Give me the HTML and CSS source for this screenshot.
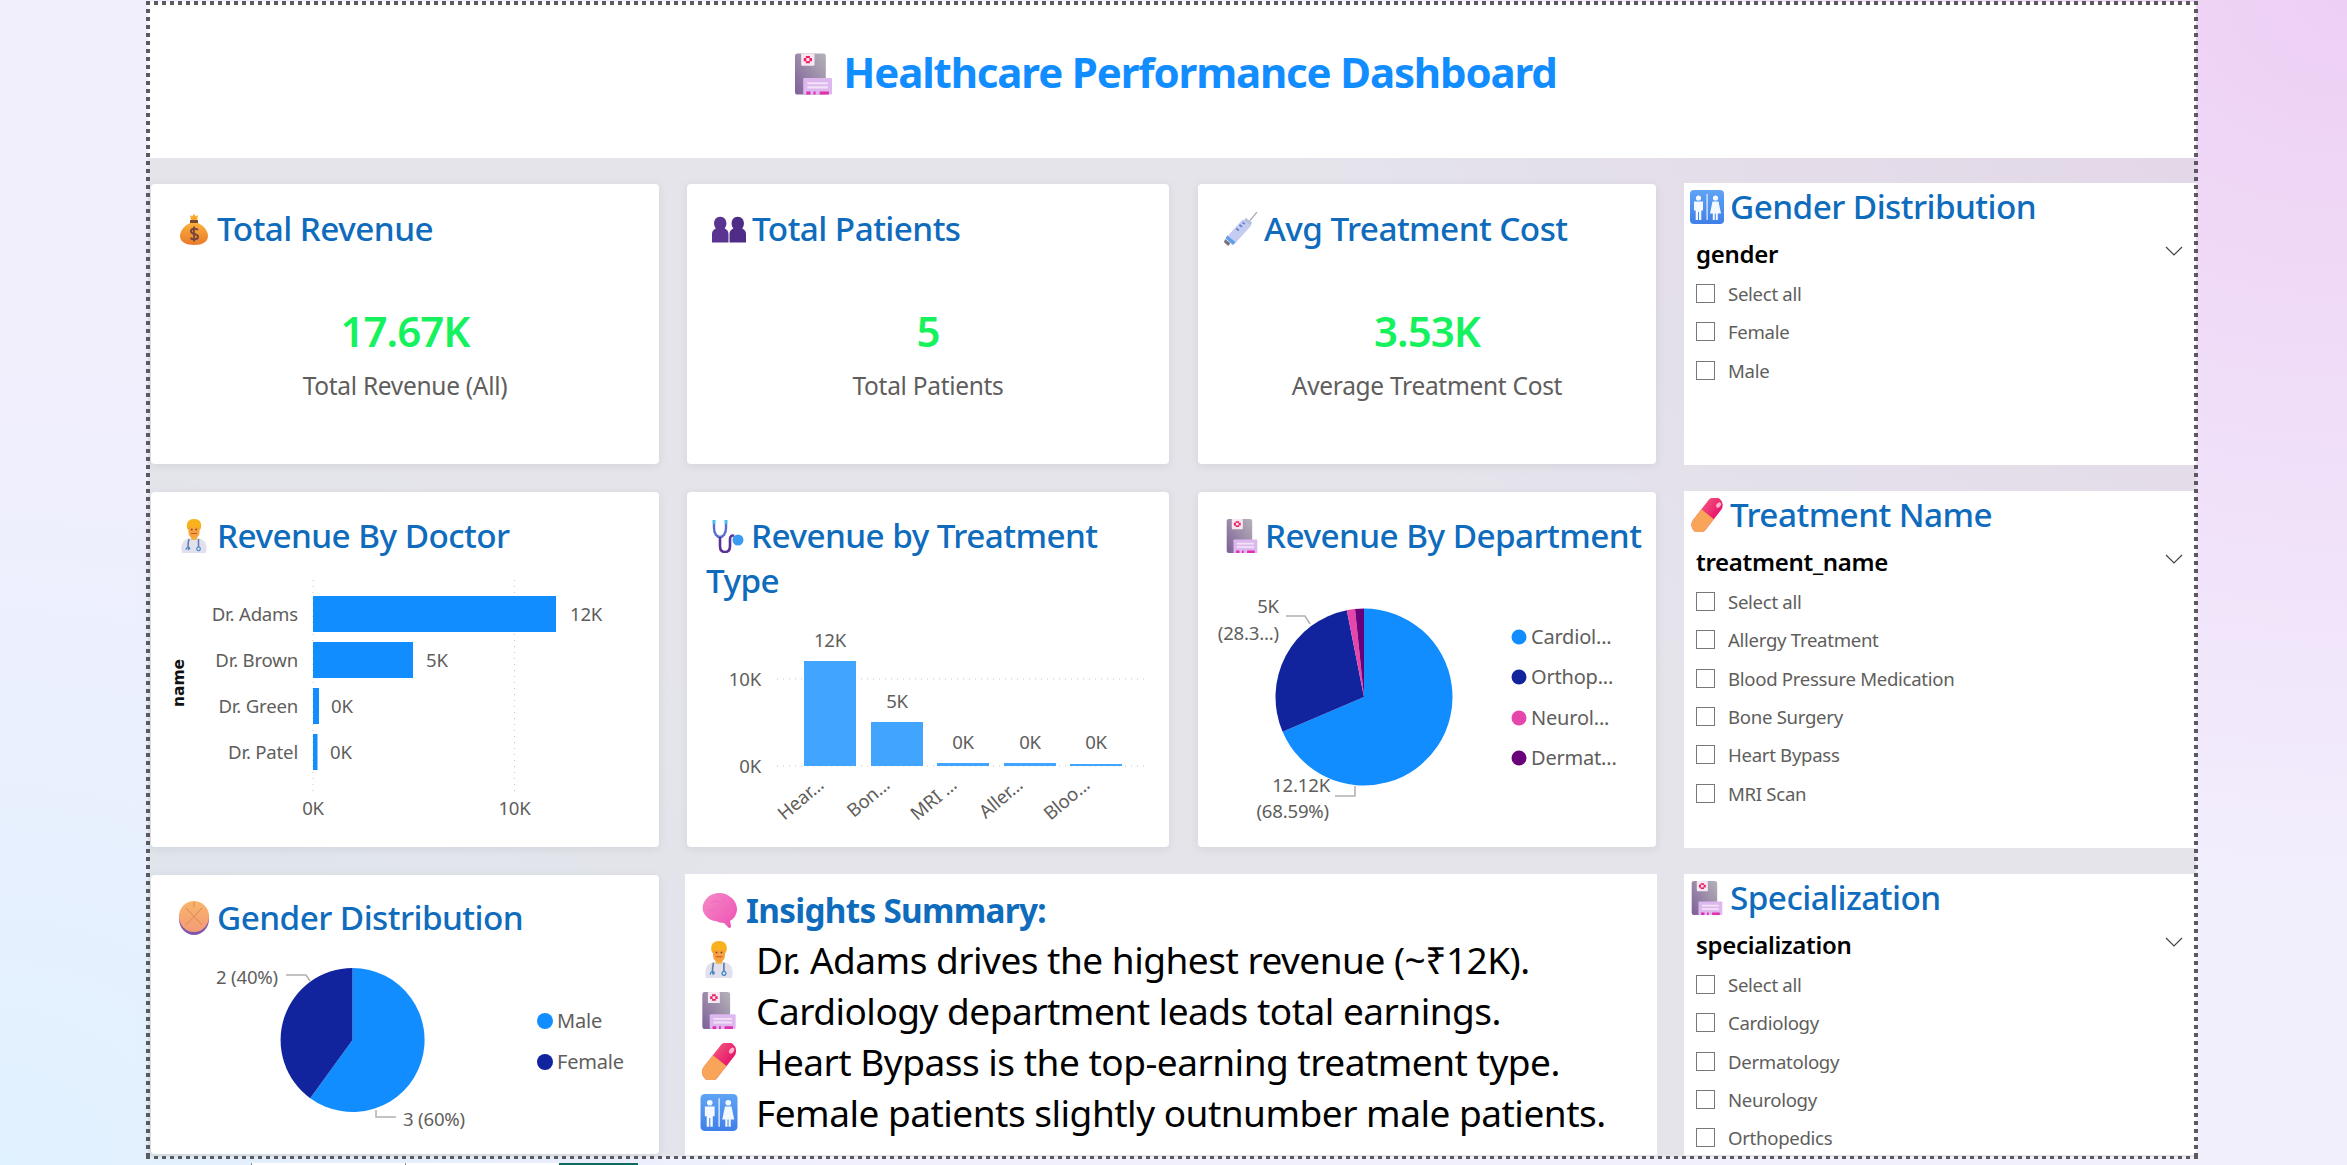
FILE: index.html
```html
<!DOCTYPE html>
<html lang="en">
<head>
    <meta charset="UTF-8">
    <title>Healthcare Performance Dashboard</title>
    <link rel="stylesheet" href="styles.css">
</head>
<body>
    <svg class="iconDefs" aria-hidden="true">
        <defs>
            <linearGradient id="gBuild" x1="0" y1="1" x2="1" y2="0"><stop offset="0" stop-color="#7d5f98"/><stop offset="1" stop-color="#b6b3b8"/></linearGradient>
            <linearGradient id="gBag" x1="0" y1="0" x2="0" y2="1"><stop offset="0" stop-color="#fbb03b"/><stop offset="1" stop-color="#e8792c"/></linearGradient>
            <linearGradient id="gPill" x1="0" y1="0" x2="1" y2="0"><stop offset="0" stop-color="#f04a7a"/><stop offset="1" stop-color="#e8186c"/></linearGradient>
            <linearGradient id="gRest" x1="0" y1="0" x2="0" y2="1"><stop offset="0" stop-color="#5fa4f5"/><stop offset="1" stop-color="#3f7fe8"/></linearGradient>
            <linearGradient id="gBrain" x1="0" y1="0" x2="1" y2="1"><stop offset="0" stop-color="#f58cc8"/><stop offset="1" stop-color="#ee4fb2"/></linearGradient>
            <linearGradient id="gBall" x1="0" y1="0" x2="0" y2="1"><stop offset="0" stop-color="#f8b56a"/><stop offset="1" stop-color="#f49a78"/></linearGradient>

            <symbol id="hospital" viewBox="0 0 36 40">
                <rect width="30" height="40" rx="2.5" fill="url(#gBuild)"/>
                <rect x="6" y="0" width="13" height="12" rx="1" fill="#f6e8f2"/>
                <path d="M10.5 2.5h4v2h2v3h-2v2h-4v-2h-2v-3h2z" fill="#ee1f63"/>
                <path d="M11 4.500h3v3h-3z" fill="#f6e8f2"/>
                <rect x="8" y="24" width="28" height="16" rx="1" fill="#dcb8ee"/>
                <path d="M12 28h20v2H12zM12 32h20v2H12z" fill="#f1e2f8"/>
                <path d="M11 37h4v3h-4zM18 37h2v3h-2zM24 37h9v3h-9z" fill="#e22fae"/>
            </symbol>

            <symbol id="moneybag" viewBox="0 0 30 34">
                <path d="M11 3l2 1.500L15 2l2 2.500L19 3l-1 5h-6z" fill="#f9a72b"/>
                <path d="M11 8h8v3h-8z" fill="#7a4a3a"/>
                <path d="M11 11C5 14 1 19 1 24c0 6 6 9 14 9s14-3 14-9c0-5-4-10-10-13z" fill="url(#gBag)"/>
                <path d="M19 18c-1-1.500-7-2-7 1.200 0 3.600 7 2 7 5.600 0 3.200-6 3-7.500 1" fill="none" stroke="#75463f" stroke-width="2"/>
                <path d="M15 14.500v15" stroke="#75463f" stroke-width="1.800"/>
            </symbol>

            <symbol id="busts" viewBox="0 0 33 26">
                <path d="M8 1c4 0 6 3 6 6.500 0 2-.6 3.500-1.700 5 2.500 1 3.700 3 3.700 5.500V26H0v-8c0-2.500 1.200-4.500 3.700-5.500C2.600 11 2 9.500 2 7.500 2 4 4 1 8 1z" fill="#5b3391"/>
                <path d="M25 1c4 0 6 3 6 6.500 0 2-.6 3.500-1.700 5 2.500 1 3.700 3 3.700 5.500V26H17v-8c0-2.500 1.200-4.500 3.700-5.500C19.600 11 19 9.500 19 7.500 19 4 21 1 25 1z" fill="#4f2c86"/>
            </symbol>

            <symbol id="syringe" viewBox="0 0 32 32">
                <path d="M31 0l-7 8.500" stroke="#a9a9b5" stroke-width="1.200" fill="none"/>
                <path d="M20.500 5.500l6 4.500-2 3-6-4.500z" fill="#b5c0dc"/>
                <path d="M17.500 7l8 6L11 29l-8-6z" fill="#c4ccf2"/>
                <path d="M14.500 12l2.500 2M17.500 9.800l2 1.600M11.500 15.500l2.500 2" stroke="#5e7fd2" stroke-width="1.600"/>
                <path d="M3 22l8 6.500-2.500 2.500L1.500 25z" fill="#5f9fe6"/>
                <path d="M1 25.500l5 4-2 2.500-4-3.500z" fill="#77727f"/>
            </symbol>

            <symbol id="restroom" viewBox="0 0 34 34">
                <rect width="34" height="34" rx="4" fill="url(#gRest)"/>
                <path d="M16.500 4h1.200v26h-1.200z" fill="#e8f1fe"/>
                <circle cx="8.500" cy="8" r="2.600" fill="#f4f8ff"/>
                <path d="M4 11.500h9v9h-1.700V30H9v-8H8v8H5.700v-9.500H4z" fill="#f4f8ff"/>
                <circle cx="25.500" cy="8" r="2.600" fill="#f4f8ff"/>
                <path d="M22.500 11.500h6l2.500 12h-3.200V30h-2v-6.500h-1V30h-2v-6.500H20z" fill="#f4f8ff"/>
            </symbol>

            <symbol id="doctor" viewBox="0 0 28 34">
                <path d="M2 34c-1.500-7 0-12 5-14l7-2 7 2c5 2 6.500 7 5 14z" fill="#e3e0ee"/>
                <path d="M10.500 17h7l-1 4h-5z" fill="#f0b441"/>
                <path d="M7 9C6 3 9 0 14 0s8 3 7 9l-1 2H8z" fill="#f7b21d"/>
                <path d="M8.500 8c2 1 9 1 11 0v5c0 4-2.500 6-5.500 6s-5.500-2-5.500-6z" fill="#f9a13a"/>
                <path d="M11 14.500h6" stroke="#c2553b" stroke-width="1"/>
                <path d="M11 10.500h1.500M15.500 10.500H17" stroke="#6c4234" stroke-width="1.300"/>
                <path d="M9 20c-1 5-2 8 0 11M18.500 20v8" stroke="#5c7da8" stroke-width="1.500" fill="none"/>
                <path d="M6 31c0-3 3-4 4-1M18.500 28a1.800 1.800 0 1 0 .1 0z" stroke="#3c8ac9" stroke-width="1.200" fill="none"/>
            </symbol>

            <symbol id="stethoscope" viewBox="0 0 34 34">
                <path d="M3 1v8c0 6 3 9 6 9s6-3 6-9V1" fill="none" stroke="#5b6fd0" stroke-width="2.400"/>
                <path d="M3 5V1M15 5V1" stroke="#3ec4e8" stroke-width="2.600"/>
                <path d="M9 18v9c0 4 2 6 5 6s5-2 5-6v-7c0-3 2-4 4-3" fill="none" stroke="#5a3398" stroke-width="2.600"/>
                <circle cx="27" cy="21" r="5.500" fill="#3b9bf0"/>
            </symbol>

            <symbol id="pill" viewBox="0 0 34 34">
                <g transform="rotate(38 17 17)">
                    <rect x="9" y="-3.500" width="16" height="41" rx="8" fill="url(#gPill)"/>
                    <path d="M9 16h16v13.500a8 8 0 0 1-16 0z" fill="#f8a55a"/>
                    <ellipse cx="20" cy="2" rx="2" ry="3" fill="#fbb4cc"/>
                </g>
            </symbol>

            <symbol id="brainball" viewBox="0 0 30 34">
                <ellipse cx="15" cy="18" rx="15" ry="16" fill="#7d58a8"/>
                <ellipse cx="15" cy="15.500" rx="15" ry="15.500" fill="url(#gBall)"/>
                <path d="M7 7l16 17M23 7L7 24M15 1v5" stroke="#d9884e" stroke-width="1" fill="none"/>
            </symbol>

            <symbol id="brain" viewBox="0 0 36 36">
                <path d="M12 1c5-2 11-1 15 2 5 3 8 8 8 13 0 5-3 10-7 12l1 5c0 2-2 3-3 1l-4-4c-3 0-6-1-8-2-3 0-8-2-10-5C1 20 0 16 1 12 3 6 7 2 12 1z" fill="url(#gBrain)"/>
                <path d="M9 10c4-3 8-2 10 1M5 18c4-2 9-1 11 3M20 6c3 2 5 5 4 9M24 22c3-1 6-3 7-7" stroke="#ee6cbd" stroke-width="1.200" fill="none"/>
            </symbol>
        </defs>
    </svg>

    <div class="canvas">
        <header class="topBar">
            <h1 class="mainTitle"><svg class="mainIcon"><use href="#hospital"/></svg>Healthcare Performance Dashboard</h1>
        </header>

        <div class="grid">
            <!-- row 1 -->
            <section class="card kpi">
                <h2 class="cardTitle"><svg class="ico"><use href="#moneybag"/></svg>Total Revenue</h2>
                <div class="kpiValue">17.67K</div>
                <div class="kpiLabel">Total Revenue (All)</div>
            </section>
            <section class="card kpi">
                <h2 class="cardTitle tightLeft"><svg class="ico"><use href="#busts"/></svg>Total Patients</h2>
                <div class="kpiValue">5</div>
                <div class="kpiLabel">Total Patients</div>
            </section>
            <section class="card kpi inset">
                <h2 class="cardTitle"><svg class="ico"><use href="#syringe"/></svg>Avg Treatment Cost</h2>
                <div class="kpiValue">3.53K</div>
                <div class="kpiLabel">Average Treatment Cost</div>
            </section>
            <section class="slicer">
                <h2 class="slicerTitle"><svg class="ico"><use href="#restroom"/></svg>Gender Distribution</h2>
                <div class="slicerHead"><span>gender</span><svg class="chev" width="18" height="10"><polyline points="1,1 9,9 17,1"/></svg></div>
                <ul class="slicerList">
                    <li class="slicerItem"><i class="box"></i>Select all</li>
                    <li class="slicerItem"><i class="box"></i>Female</li>
                    <li class="slicerItem"><i class="box"></i>Male</li>
                </ul>
            </section>

            <!-- row 2 -->
            <section class="card">
                <h2 class="cardTitle"><svg class="ico"><use href="#doctor"/></svg>Revenue By Doctor</h2>
                <svg class="chart" width="508" height="289" viewBox="151 558 508 289">
                    <line class="gridV" x1="313" y1="580" x2="313" y2="792"/>
                    <line class="gridV" x1="514.500" y1="580" x2="514.500" y2="792"/>
                    <rect class="bar" x="313" y="596" width="243" height="36"/>
                    <rect class="bar" x="313" y="642" width="100" height="36"/>
                    <rect class="bar" x="313" y="688" width="6" height="36"/>
                    <rect class="bar" x="313" y="734" width="4.500" height="36"/>
                    <text class="lbl end" x="298" y="621">Dr. Adams</text>
                    <text class="lbl end" x="298" y="667">Dr. Brown</text>
                    <text class="lbl end" x="298" y="713">Dr. Green</text>
                    <text class="lbl end" x="298" y="759">Dr. Patel</text>
                    <text class="lbl" x="570" y="621">12K</text>
                    <text class="lbl" x="426" y="667">5K</text>
                    <text class="lbl" x="331" y="713">0K</text>
                    <text class="lbl" x="330" y="759">0K</text>
                    <text class="lbl mid" x="313" y="815">0K</text>
                    <text class="lbl mid" x="514.500" y="815">10K</text>
                    <text class="axisName" transform="translate(184 683) rotate(-90)">name</text>
                </svg>
            </section>
            <section class="card">
                <h2 class="cardTitle wrapTitle"><svg class="ico"><use href="#stethoscope"/></svg>Revenue by Treatment Type</h2>
                <svg class="chart" width="482" height="244" viewBox="687 603 482 244">
                    <line class="gridH" x1="777" y1="679" x2="1147" y2="679"/>
                    <line class="gridH" x1="777" y1="766" x2="1147" y2="766"/>
                    <rect class="barLight" x="804" y="661" width="52" height="105"/>
                    <rect class="barLight" x="871" y="722" width="52" height="44"/>
                    <rect class="barLight" x="937" y="763" width="52" height="3"/>
                    <rect class="barLight" x="1004" y="763" width="52" height="3"/>
                    <rect class="barLight" x="1070" y="764" width="52" height="2"/>
                    <text class="lbl end" x="761" y="686">10K</text>
                    <text class="lbl end" x="761" y="773">0K</text>
                    <text class="lbl mid" x="830" y="647">12K</text>
                    <text class="lbl mid" x="897" y="708">5K</text>
                    <text class="lbl mid" x="963" y="749">0K</text>
                    <text class="lbl mid" x="1030" y="749">0K</text>
                    <text class="lbl mid" x="1096" y="749">0K</text>
                    <text class="lbl end" transform="translate(825 787) rotate(-40)">Hear...</text>
                    <text class="lbl end" transform="translate(891 787) rotate(-40)">Bon...</text>
                    <text class="lbl end" transform="translate(958 787) rotate(-40)">MRI ...</text>
                    <text class="lbl end" transform="translate(1024 787) rotate(-40)">Aller...</text>
                    <text class="lbl end" transform="translate(1091 787) rotate(-40)">Bloo...</text>
                </svg>
            </section>
            <section class="card inset">
                <h2 class="cardTitle wideLeft"><svg class="ico"><use href="#hospital"/></svg>Revenue By Department</h2>
                <svg class="chart" width="458" height="289" viewBox="1198 558 458 289">
                    <path class="sliceBlue" d="M1364 697V608.500A88.500 88.500 0 1 1 1282.600 731.700Z"/>
                    <path class="sliceNavy" d="M1364 697L1282.600 731.700A88.500 88.500 0 0 1 1346.800 610.200Z"/>
                    <path class="slicePink" d="M1364 697L1346.800 610.200A88.500 88.500 0 0 1 1355 609Z"/>
                    <path class="slicePurple" d="M1364 697L1355 609A88.500 88.500 0 0 1 1364 608.500Z"/>
                    <polyline class="leader" points="1286,616 1305,616 1310,624"/>
                    <polyline class="leader" points="1335,796 1355,796 1355,786"/>
                    <text class="lbl mid" x="1268" y="613">5K</text>
                    <text class="lbl end" x="1279" y="640">(28.3...)</text>
                    <text class="lbl end" x="1330" y="792">12.12K</text>
                    <text class="lbl end" x="1329" y="818">(68.59%)</text>
                    <circle class="sliceBlue" cx="1519" cy="637" r="7.500"/>
                    <circle class="sliceNavy" cx="1519" cy="677" r="7.500"/>
                    <circle class="slicePink" cx="1519" cy="718" r="7.500"/>
                    <circle class="slicePurple" cx="1519" cy="758" r="7.500"/>
                    <text class="legend" x="1531" y="644">Cardiol...</text>
                    <text class="legend" x="1531" y="684">Orthop...</text>
                    <text class="legend" x="1531" y="725">Neurol...</text>
                    <text class="legend" x="1531" y="765">Dermat...</text>
                </svg>
            </section>
            <section class="slicer">
                <h2 class="slicerTitle"><svg class="ico"><use href="#pill"/></svg>Treatment Name</h2>
                <div class="slicerHead"><span>treatment_name</span><svg class="chev" width="18" height="10"><polyline points="1,1 9,9 17,1"/></svg></div>
                <ul class="slicerList">
                    <li class="slicerItem"><i class="box"></i>Select all</li>
                    <li class="slicerItem"><i class="box"></i>Allergy Treatment</li>
                    <li class="slicerItem"><i class="box"></i>Blood Pressure Medication</li>
                    <li class="slicerItem"><i class="box"></i>Bone Surgery</li>
                    <li class="slicerItem"><i class="box"></i>Heart Bypass</li>
                    <li class="slicerItem"><i class="box"></i>MRI Scan</li>
                </ul>
            </section>

            <!-- row 3 -->
            <section class="card lastRow">
                <h2 class="cardTitle"><svg class="ico"><use href="#brainball"/></svg>Gender Distribution</h2>
                <svg class="chart" width="508" height="214" viewBox="151 940 508 214">
                    <path class="sliceBlue" d="M352.500 1040V968A72 72 0 1 1 310.200 1098.200Z"/>
                    <path class="sliceNavy" d="M352.500 1040L310.200 1098.200A72 72 0 0 1 352.500 968Z"/>
                    <polyline class="leader" points="286,975 306,975 310,981"/>
                    <polyline class="leader" points="376,1110 376,1117 396,1117"/>
                    <text class="lbl" x="216" y="984">2 (40%)</text>
                    <text class="lbl" x="403" y="1126">3 (60%)</text>
                    <circle class="sliceBlue" cx="545" cy="1021" r="8"/>
                    <circle class="sliceNavy" cx="545" cy="1062" r="8"/>
                    <text class="legend" x="557" y="1028">Male</text>
                    <text class="legend" x="557" y="1069">Female</text>
                </svg>
            </section>
            <section class="insights">
                <h2 class="insightTitle"><svg class="ico"><use href="#brain"/></svg>Insights Summary:</h2>
                <p class="insightLine"><svg class="lineIcon"><use href="#doctor"/></svg>Dr. Adams drives the highest revenue (~₹12K).</p>
                <p class="insightLine"><svg class="lineIcon"><use href="#hospital"/></svg>Cardiology department leads total earnings.</p>
                <p class="insightLine"><svg class="lineIcon"><use href="#pill"/></svg>Heart Bypass is the top-earning treatment type.</p>
                <p class="insightLine"><svg class="lineIcon"><use href="#restroom"/></svg>Female patients slightly outnumber male patients.</p>
            </section>
            <section class="slicer">
                <h2 class="slicerTitle"><svg class="ico"><use href="#hospital"/></svg>Specialization</h2>
                <div class="slicerHead"><span>specialization</span><svg class="chev" width="18" height="10"><polyline points="1,1 9,9 17,1"/></svg></div>
                <ul class="slicerList">
                    <li class="slicerItem"><i class="box"></i>Select all</li>
                    <li class="slicerItem"><i class="box"></i>Cardiology</li>
                    <li class="slicerItem"><i class="box"></i>Dermatology</li>
                    <li class="slicerItem"><i class="box"></i>Neurology</li>
                    <li class="slicerItem"><i class="box"></i>Orthopedics</li>
                </ul>
            </section>
        </div>
    </div>

    <div class="tabs"><span class="tab"></span><span class="tab"></span><span class="tabOn"></span></div>
</body>
</html>
```

FILE: styles.css
```css
*{
    padding: 0;
    margin: 0;
    box-sizing: border-box;
}
ul{
    list-style: none;
}
html,body{
    height: 1165px;
    overflow: hidden;
}
body{
    position: relative;
    font-family: "Noto Sans", "Open Sans", sans-serif;
    background:
        radial-gradient(1100px 900px at 100% 0, #eecff4 0, rgba(238, 207, 244, 0) 100%),
        radial-gradient(900px 800px at 0 100%, #e0f1ff 0, rgba(224, 241, 255, 0) 100%),
        #f2effd;
}
.iconDefs{
    position: absolute;
    width: 0;
    height: 0;
}
.canvas{
    position: relative;
    width: 2048px;
    height: 1155px;
    margin: 2px 0 0 148px;
    background-color: rgba(216, 218, 217, 0.5);
}
/* dotted selection frame drawn on top of the canvas */
.canvas::after{
    content: "";
    position: absolute;
    top: -1px;
    left: -2px;
    right: -2px;
    bottom: -2px;
    pointer-events: none;
    background:
        linear-gradient(to right, #5a5a5f 50%, transparent 50%) 0 0 / 8px 4px repeat-x,
        linear-gradient(to right, #5a5a5f 50%, transparent 50%) 0 100% / 8px 3px repeat-x,
        linear-gradient(to bottom, #5a5a5f 55%, transparent 55%) 0 0 / 4px 8px repeat-y,
        linear-gradient(to bottom, #5a5a5f 55%, transparent 55%) 100% 0 / 4px 8px repeat-y;
}
.topBar{
    height: 156px;
    background-color: #fff;
    padding: 41px 0 0 8px;
}
.mainTitle{
    font-size: 42px;
    line-height: 58px;
    font-weight: 700;
    color: #118dff;
    text-align: center;
    letter-spacing: -1.15px;
}
.mainIcon{
    width: 37px;
    height: 42px;
    margin-right: 11px;
    vertical-align: -7px;
}
.grid{
    display: grid;
    grid-template-columns: 508px 482px 460px 511px;
    grid-template-rows: 280px 355px 279px;
    gap: 28px;
    padding: 26px 0 0 3px;
}
.card{
    display: flex;
    flex-direction: column;
    background-color: #fff;
    border-radius: 4px;
    padding-top: 21px;
    box-shadow: 0 2px 8px rgba(90, 95, 110, 0.12);
}
.inset{
    margin: 0 1px;
}
.kpi{
    padding-top: 22px;
    text-align: center;
}
.lastRow{
    padding-top: 20px;
}
.cardTitle,.slicerTitle,.insightTitle{
    font-size: 33.300px;
    line-height: 45px;
    font-weight: 500;
    color: #0f6cbd;
    text-align: left;
    letter-spacing: -0.55px;
}
.cardTitle{
    padding-left: 26px;
    padding-right: 20px;
}
.tightLeft{
    padding-left: 25px;
}
.inset .cardTitle{
    padding-left: 26px;
}
.inset .wideLeft{
    padding-left: 27px;
    padding-right: 0;
    white-space: nowrap;
}
.wrapTitle{
    padding-left: 19px;
}
.wrapTitle .ico{
    margin-left: 5px;
}
.ico{
    width: 34px;
    height: 34px;
    margin-right: 6px;
    vertical-align: -5px;
}
.kpiValue{
    margin-top: 55px;
    font-size: 42px;
    line-height: 50px;
    font-weight: 600;
    color: #16f25d;
    letter-spacing: -1px;
}
.kpiLabel{
    margin-top: 13px;
    font-size: 24.500px;
    line-height: 34px;
    color: #605e5c;
    letter-spacing: -0.3px;
}
.chart{
    display: block;
}
.gridV,.gridH{
    stroke: #c8c6c4;
    stroke-width: 1;
    stroke-dasharray: 1 5;
}
.bar{
    fill: #118dff;
}
.barLight{
    fill: #41a4ff;
}
.lbl,.legend{
    font-family: "Noto Sans", "Open Sans", sans-serif;
    font-size: 18.600px;
    fill: #605e5c;
    letter-spacing: -0.2px;
}
.legend{
    font-size: 20px;
}
.end{
    text-anchor: end;
}
.mid{
    text-anchor: middle;
}
.axisName{
    font-family: "DejaVu Sans", sans-serif;
    font-size: 15.500px;
    font-weight: 700;
    fill: #111;
    text-anchor: middle;
}
.sliceBlue{
    fill: #118dff;
}
.sliceNavy{
    fill: #12239e;
}
.slicePink{
    fill: #e645ab;
}
.slicePurple{
    fill: #6b007b;
}
.leader{
    fill: none;
    stroke: #b3b0ad;
    stroke-width: 1.500;
}
.slicer{
    background-color: #fff;
    margin: -1px 0 -1px -1px;
    padding: 1px 0 0 12px;
    overflow: hidden;
}
.slicerTitle{
    margin-left: -6px;
}
.slicerHead{
    display: flex;
    justify-content: space-between;
    align-items: flex-start;
    margin-top: 7px;
    padding-right: 13px;
    font-size: 24px;
    line-height: 36px;
    font-weight: 600;
    color: #000;
    letter-spacing: -0.3px;
}
.chev{
    margin-top: 10px;
}
.chev polyline{
    fill: none;
    stroke: #444;
    stroke-width: 1.200;
}
.slicerList{
    margin-top: 2.500px;
}
.slicerItem{
    display: flex;
    align-items: center;
    gap: 13px;
    height: 38.300px;
    font-size: 18.600px;
    color: #605e5c;
    letter-spacing: -0.3px;
}
.box{
    width: 19px;
    height: 19px;
    border: 1px solid #7a7876;
}
.insights{
    grid-column: span 2;
    background-color: #fff;
    margin: -1px 0 -1px -2px;
    padding: 14px 0 0 17px;
}
.insightTitle{
    font-weight: 700;
    letter-spacing: -0.7px;
    white-space: nowrap;
}
.insightTitle .ico{
    width: 36px;
    height: 36px;
    margin-right: 8px;
    vertical-align: -6px;
}
.insightLine{
    display: flex;
    align-items: center;
    gap: 18px;
    margin-left: -2px;
    font-size: 37px;
    line-height: 51px;
    color: #000;
    letter-spacing: -0.5px;
    white-space: nowrap;
}
.insightLine:first-of-type{
    margin-top: 1px;
}
.lineIcon{
    flex: none;
    width: 38px;
    height: 37px;
}
.tabs{
    display: flex;
    position: absolute;
    left: 251px;
    bottom: 0;
    height: 2px;
}
.tab{
    width: 154px;
    background-color: #fff;
    border-left: 1px solid #8a8886;
}
.tabOn{
    width: 79px;
    background-color: #0f6b5f;
}
```
